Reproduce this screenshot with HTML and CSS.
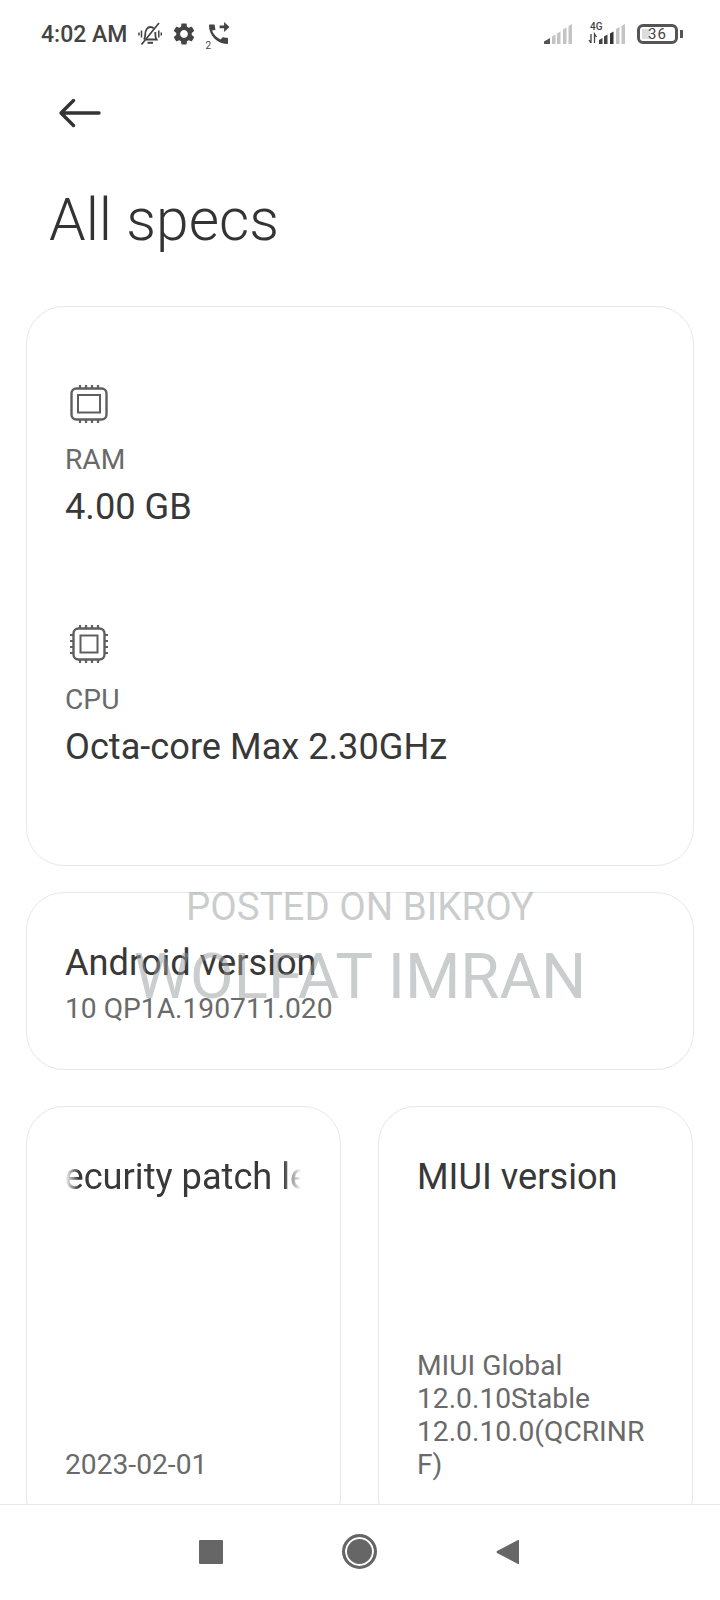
FILE: index.html
```html
<!DOCTYPE html>
<html lang="en">
<head>
    <meta charset="UTF-8">
    <meta name="viewport" content="width=device-width, initial-scale=1.0">
    <title>All specs</title>
    <link rel="stylesheet" href="styles.css">
</head>
<body>
    <div class="screen">
        <div class="status-bar">
            <span class="clock">4:02 AM</span>
            <svg class="st-icon" width="24" height="24" viewBox="0 0 24 24" fill="none" stroke="#444" stroke-width="1.800">
                <path d="M6 17.500c1-1.500 1.300-3 1.300-5.500 0-4 2.200-7 5-7 1.400 0 2.600.5 3.500 1.500M17.300 10v2c0 2.300.4 4 1.300 5.500H7.500"/>
                <path d="M9.500 20.800h5.500" stroke-width="2"/>
                <path d="M3.500 22.500L21 1" stroke-width="1.700"/>
                <path d="M3.500 8.500v7M1 10.500v3M20.800 8.500v7M23.300 10.500v3" stroke-width="1.500"/>
            </svg>
            <svg class="st-icon gear" width="26" height="26" viewBox="0 0 24 24" fill="#444">
                <path d="M19.140 12.940c.04-.3.06-.61.06-.94 0-.32-.02-.64-.07-.94l2.030-1.580c.18-.14.23-.41.12-.61l-1.920-3.320c-.12-.22-.37-.29-.59-.22l-2.390.96c-.5-.38-1.030-.7-1.620-.94l-.36-2.540c-.04-.24-.24-.41-.48-.41h-3.840c-.24 0-.43.17-.47.41l-.36 2.540c-.59.24-1.130.57-1.620.94l-2.390-.96c-.22-.08-.47 0-.59.22L2.740 8.870c-.12.21-.08.47.12.61l2.030 1.580c-.05.3-.09.63-.09.94s.02.64.07.94l-2.030 1.580c-.18.14-.23.41-.12.61l1.920 3.320c.12.22.37.29.59.22l2.390-.96c.5.38 1.030.7 1.620.94l.36 2.540c.05.24.24.41.48.41h3.840c.24 0 .44-.17.47-.41l.36-2.540c.59-.24 1.130-.56 1.620-.94l2.390.96c.22.08.47 0 .59-.22l1.920-3.320c.12-.22.07-.47-.12-.61l-2.010-1.580zM12 15.600c-1.980 0-3.600-1.620-3.600-3.600s1.620-3.600 3.600-3.600 3.600 1.620 3.600 3.600-1.620 3.600-3.600 3.600z"/>
            </svg>
            <span class="call">
                <svg width="24" height="24" viewBox="0 0 24 24" fill="#444">
                    <path d="M5 8.500c1.500 3.700 4.500 7 8.500 9l2-2c.3-.3.700-.4 1.100-.3 1.200.4 2.400.6 3.400.6.600 0 1 .4 1 1V21c0 .6-.4 1-1 1C10.500 22 2 13.500 2 3.500c0-.6.4-1 1-1h3.800c.6 0 1 .4 1 1 0 1.200.2 2.400.6 3.500.1.400 0 .8-.3 1.100z"/>
                    <path d="M13 8V5h5V1l6 5.500-6 5.500V8z" transform="scale(.9) translate(1 -1)"/>
                </svg>
                <span class="sim">2</span>
            </span>
            <span class="status-right">
                <svg width="28" height="20" viewBox="0 0 28 20">
                    <path d="M0 17.500L6 14v6H0z" fill="#555"/>
                    <path d="M8 12.500l3.500-2V20H8zM13 9.500l3.500-2V20H13zM19 5.500l3.500-2V20H19zM24.500 2L28 0v20h-3.500z" fill="#c4c4c4"/>
                </svg>
                <span class="sig-4g">
                    <span class="lte">4G</span>
                    <svg width="37" height="20" viewBox="0 0 37 20">
                        <path d="M3 10v9M1 16l2 3M6.500 19v-9l2 3" fill="none" stroke="#444" stroke-width="1.300"/>
                        <path d="M11 16l3.500-2v6H11zM16 12.500l3.500-2V20H16z" fill="#444"/>
                        <path d="M22 9.500l3.500-2V20H22z" fill="#333"/>
                        <path d="M28 5l3.500-2v17H28zM33.500 2L37 0v20h-3.500z" fill="#c4c4c4"/>
                    </svg>
                </span>
                <span class="battery">
                    <span class="battery-level"></span>
                    <span class="battery-num">36</span>
                </span>
                <span class="battery-nub"></span>
            </span>
        </div>

        <div class="topbar">
            <svg width="46" height="32" viewBox="0 0 46 32" fill="none" stroke="#333" stroke-width="3.400" stroke-linecap="round" stroke-linejoin="round">
                <path d="M3 15h38M15.500 2.500L3 15l12.500 12.500"/>
            </svg>
        </div>
        <h1 class="page-title">All specs</h1>

        <div class="content">
            <div class="card card-main">
                <div class="spec">
                    <svg class="spec-icon" width="40" height="40" viewBox="0 0 40 40" fill="none" stroke="#5f5f5f" stroke-width="2.400">
                        <rect x="2.500" y="4.500" width="35" height="31" rx="5"/>
                        <rect x="9" y="11" width="22" height="17.500" stroke-width="2"/>
                        <path d="M11 1v3M17 1v3M23 1v3M29 1v3M11 36v3M17 36v3M23 36v3M29 36v3" stroke-width="2.200"/>
                    </svg>
                    <div class="spec-label">RAM</div>
                    <div class="spec-value">4.00 GB</div>
                </div>
                <div class="spec">
                    <svg class="spec-icon" width="40" height="40" viewBox="0 0 40 40" fill="none" stroke="#5f5f5f" stroke-width="2.400">
                        <rect x="4.500" y="4.500" width="31" height="31" rx="5"/>
                        <rect x="11.500" y="11.500" width="17" height="17" stroke-width="2"/>
                        <path d="M11 1v3M17 1v3M23 1v3M29 1v3M11 36v3M17 36v3M23 36v3M29 36v3M1 11h3M1 17h3M1 23h3M1 29h3M36 11h3M36 17h3M36 23h3M36 29h3" stroke-width="2.200"/>
                    </svg>
                    <div class="spec-label">CPU</div>
                    <div class="spec-value">Octa-core Max 2.30GHz</div>
                </div>
            </div>

            <div class="card card-android">
                <div class="spec-value">Android version</div>
                <div class="spec-label">10 QP1A.190711.020</div>
            </div>

            <div class="card-row">
                <div class="card card-half">
                    <div class="marquee"><span class="marquee-text">Security patch level</span></div>
                    <div class="spec-label">2023-02-01</div>
                </div>
                <div class="card card-half">
                    <div class="spec-value">MIUI version</div>
                    <div class="spec-label">MIUI Global 12.0.10Stable 12.0.10.0(QCRINRF)</div>
                </div>
            </div>
        </div>

        <div class="watermark">
            <div class="wm-small">POSTED ON BIKROY</div>
            <div class="wm-big">WOLFAT IMRAN</div>
        </div>

        <div class="navbar">
            <span class="nav-square"></span>
            <span class="nav-home"></span>
            <svg width="24" height="26" viewBox="0 0 24 26"><path d="M23 1.500v23c0 .6-.5.8-1 .4L1 14c-.6-.5-.6-1.500 0-2L22 1.100c.5-.4 1-.2 1 .4z" fill="#666"/></svg>
        </div>
    </div>
</body>
</html>
```

FILE: styles.css
```css
body {
    margin: 0;
    font-family: Roboto, sans-serif;
    background: #fff;
    color: #333;
}
.screen {
    position: relative;
    width: 720px;
    height: 1600px;
    overflow: hidden;
    display: flex;
    flex-direction: column;
}
.status-bar {
    height: 68px;
    flex: none;
    display: flex;
    align-items: center;
    padding: 0 37px 0 41px;
    color: #444;
}
.clock {
    font-size: 23px;
    font-weight: 500;
    margin-right: 11px;
}
.st-icon {
    flex: none;
}
.gear {
    margin: 0 10px 0 9px;
}
.call {
    position: relative;
    display: flex;
}
.sim {
    position: absolute;
    left: -2px;
    bottom: -5px;
    font-size: 10px;
}
.status-right {
    margin-left: auto;
    display: flex;
    align-items: center;
}
.sig-4g {
    position: relative;
    display: flex;
    margin: 0 12px 0 16px;
}
.lte {
    position: absolute;
    left: 2px;
    top: -2px;
    font-size: 10px;
    font-weight: 500;
    line-height: 10px;
}
.battery {
    position: relative;
    box-sizing: border-box;
    width: 41px;
    height: 20px;
    border: 3px solid #555;
    border-radius: 6px;
    display: flex;
    align-items: center;
    justify-content: center;
}
.battery-level {
    position: absolute;
    left: 2px;
    top: 2px;
    bottom: 2px;
    width: 8px;
    background: #ddd;
}
.battery-num {
    position: relative;
    font-size: 15px;
    letter-spacing: 1px;
    line-height: 14px;
}
.battery-nub {
    width: 3px;
    height: 8px;
    margin-left: 2px;
    background: #555;
}
.topbar {
    height: 32px;
    padding: 30px 0 0 58px;
    flex: none;
}
.page-title {
    margin: 55px 0 0 49px;
    font-size: 58.7px;
    font-weight: 300;
    line-height: 70px;
    color: #333;
    flex: none;
}
.content {
    flex: 1;
    min-height: 0;
    overflow: hidden;
    padding: 51px 26px 0;
}
.card {
    box-sizing: border-box;
    border: 1px solid #e8e8e8;
    border-radius: 38px;
    background: #fff;
}
.card-main {
    height: 560px;
    padding: 77px 38px 0;
}
.spec {
    height: 240px;
}
.spec-icon {
    display: block;
    margin-left: 4px;
}
.spec-label {
    font-size: 28.2px;
    line-height: 33px;
    color: #6a6a6a;
}
.spec .spec-label {
    margin-top: 19px;
}
.spec-value {
    font-size: 36.2px;
    line-height: 44px;
    color: #383838;
}
.spec .spec-value {
    margin-top: 9px;
}
.card-android {
    height: 178px;
    margin-top: 26px;
    padding: 48px 38px 0;
}
.card-android .spec-label {
    margin-top: 7px;
}
.card-row {
    display: flex;
    gap: 37px;
    margin-top: 36px;
}
.card-half {
    width: 315px;
    height: 430px;
    padding: 48px 38px 0;
    display: flex;
    flex-direction: column;
}
.card-half .spec-label {
    margin-top: auto;
    margin-bottom: 54px;
    overflow-wrap: anywhere;
}
.marquee {
    width: 236px;
    overflow: hidden;
    white-space: nowrap;
    font-size: 36.2px;
    line-height: 44px;
    color: #383838;
    -webkit-mask-image: linear-gradient(to right, transparent, #000 14px, #000 218px, transparent);
    mask-image: linear-gradient(to right, transparent, #000 14px, #000 218px, transparent);
}
.marquee-text {
    display: inline-block;
    margin-left: -22px;
}
.watermark {
    position: absolute;
    left: 0;
    right: 0;
    top: 884px;
    text-align: center;
    color: rgba(150, 155, 155, 0.5);
    pointer-events: none;
}
.wm-small {
    font-size: 38.5px;
    line-height: 46px;
}
.wm-big {
    font-size: 63.5px;
    line-height: 74px;
    margin-top: 10px;
}
.navbar {
    position: absolute;
    left: 0;
    right: 0;
    bottom: 0;
    box-sizing: border-box;
    height: 96px;
    padding: 0 2px 2px 0;
    background: #fff;
    border-top: 1px solid #e8e8e8;
    display: flex;
    align-items: center;
    justify-content: center;
    gap: 119px;
}
.nav-square {
    width: 24px;
    height: 24px;
    border-radius: 1px;
    background: #666;
}
.nav-home {
    box-sizing: border-box;
    width: 35px;
    height: 35px;
    border: 3px solid #666;
    border-radius: 50%;
    background: #666;
    box-shadow: inset 0 0 0 2px #fff;
}
```
